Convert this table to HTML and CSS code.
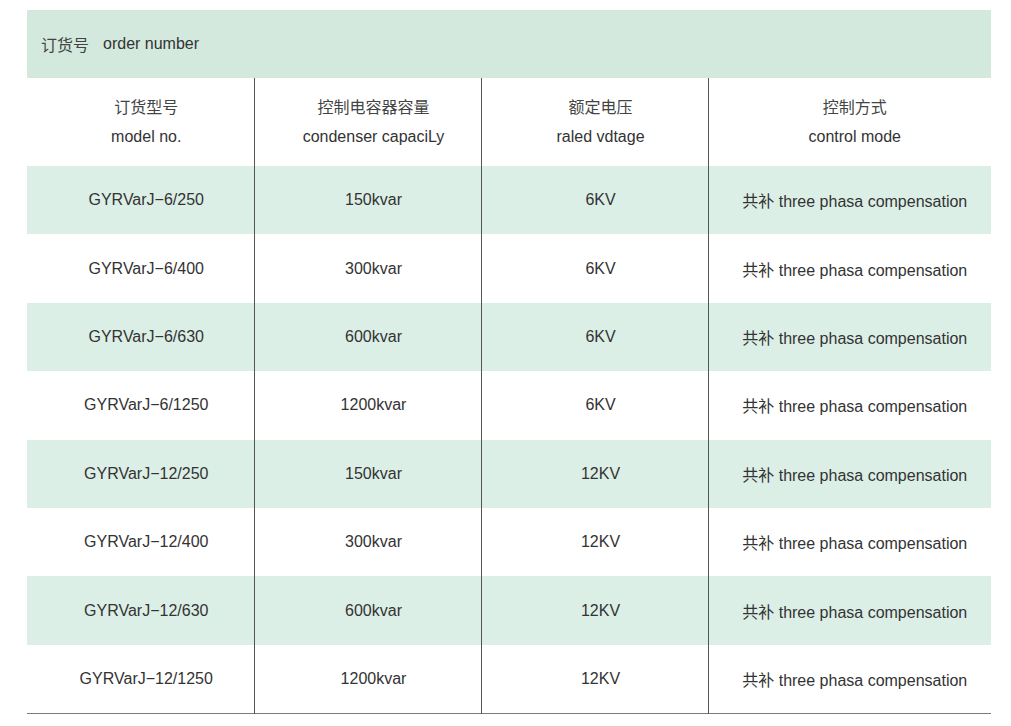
FILE: index.html
```html
<!DOCTYPE html>
<html lang="zh">
<head>
<meta charset="utf-8">
<link rel="stylesheet" href="styles.css">
</head>
<body>
<div class="sheet">
  <div class="title"><span class="zh">订货号</span><span class="en">order number</span></div>
  <table class="spec">
    <colgroup>
      <col class="c1"><col class="c2"><col class="c3"><col class="c4">
    </colgroup>
    <thead>
      <tr>
        <th><div class="zh">订货型号</div><div>model no.</div></th>
        <th><div class="zh">控制电容器容量</div><div>condenser capaciLy</div></th>
        <th><div class="zh">额定电压</div><div>raled vdtage</div></th>
        <th><div class="zh">控制方式</div><div>control mode</div></th>
      </tr>
    </thead>
    <tbody>
      <tr class="g"><td>GYRVarJ−6/250</td><td>150kvar</td><td>6KV</td><td>共补 three phasa compensation</td></tr>
      <tr><td>GYRVarJ−6/400</td><td>300kvar</td><td>6KV</td><td>共补 three phasa compensation</td></tr>
      <tr class="g"><td>GYRVarJ−6/630</td><td>600kvar</td><td>6KV</td><td>共补 three phasa compensation</td></tr>
      <tr><td>GYRVarJ−6/1250</td><td>1200kvar</td><td>6KV</td><td>共补 three phasa compensation</td></tr>
      <tr class="g"><td>GYRVarJ−12/250</td><td>150kvar</td><td>12KV</td><td>共补 three phasa compensation</td></tr>
      <tr><td>GYRVarJ−12/400</td><td>300kvar</td><td>12KV</td><td>共补 three phasa compensation</td></tr>
      <tr class="g"><td>GYRVarJ−12/630</td><td>600kvar</td><td>12KV</td><td>共补 three phasa compensation</td></tr>
      <tr><td>GYRVarJ−12/1250</td><td>1200kvar</td><td>12KV</td><td>共补 three phasa compensation</td></tr>
    </tbody>
  </table>
</div>
</body>
</html>
```
FILE: styles.css
```css
html, body {
  margin: 0;
  padding: 0;
  background: #ffffff;
}
body {
  font-family: "Liberation Sans", Arial, "Noto Sans CJK SC", sans-serif;
  color: #333333;
  font-size: 16px;
}
.sheet {
  width: 964px;
  margin: 10px 0 0 27px;
}
.title {
  height: 68px;
  background: #d3e9de;
  display: flex;
  align-items: center;
  padding-left: 14px;
  font-size: 16px;
}
.title .zh {
  margin-right: 14px;
  color: #444444;
}
.spec {
  width: 964px;
  border-collapse: collapse;
  table-layout: fixed;
  border-bottom: 1px solid #7a7a7a;
}
.c1, .c2, .c3 { width: 227px; }
.c4 { width: 283px; }
.spec th {
  height: 88px;
  padding: 0 0 0 12px;
  font-weight: normal;
  line-height: 29px;
  text-align: center;
  vertical-align: middle;
}
.spec th .zh {
  color: #444444;
}
.spec td {
  height: 68.4px;
  padding: 0 0 0 12px;
  text-align: center;
  vertical-align: middle;
}
.spec th + th,
.spec td + td {
  border-left: 1px solid #555555;
}
.spec td:last-child,
.spec th:last-child {
  padding-left: 10px;
}
.spec tr.g td {
  background: #dcefe7;
}
```
